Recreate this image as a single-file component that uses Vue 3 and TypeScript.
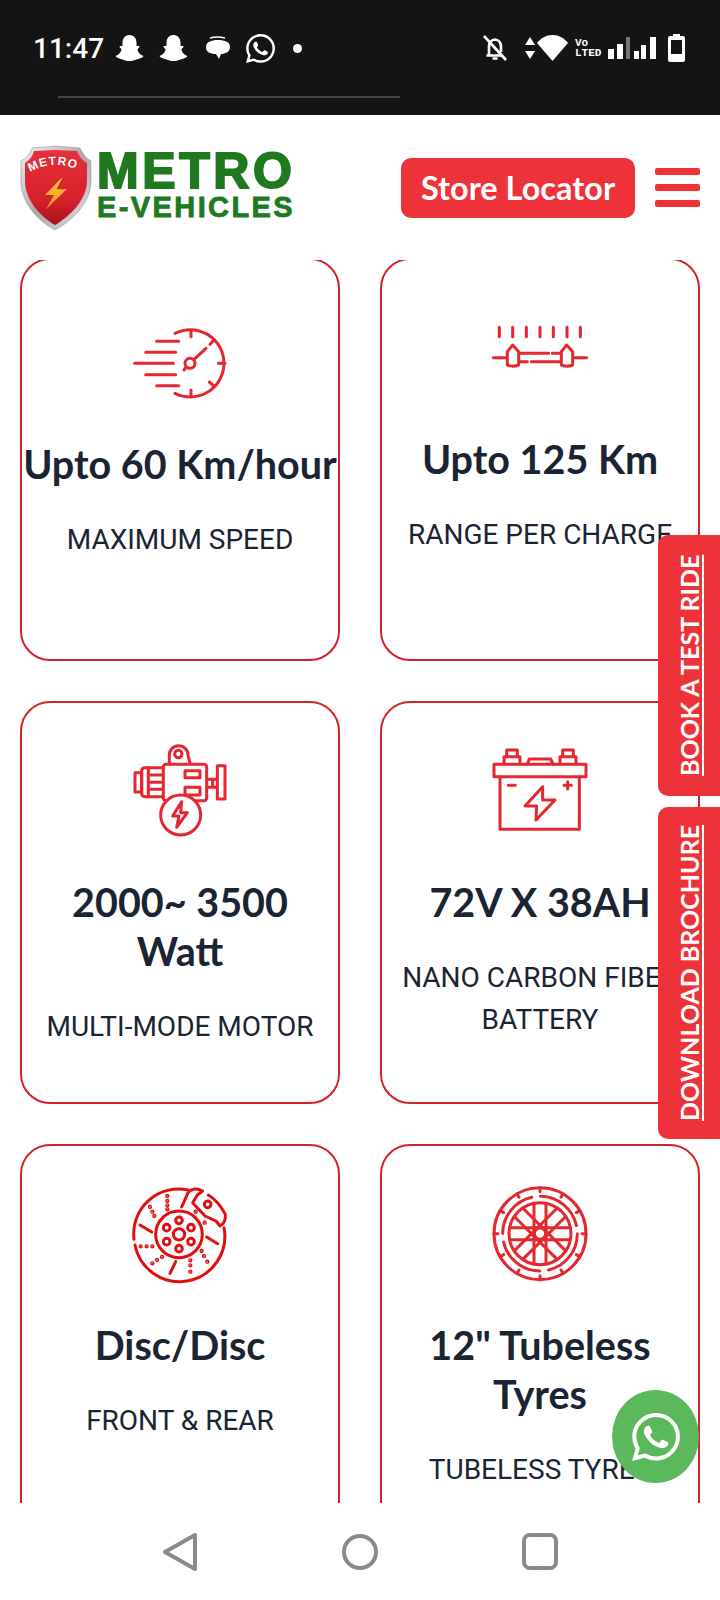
<script setup lang="ts">
type Card = { icon: string; title: string; label: string; top: number };

const cards: Card[] = [
  { icon: "speed", title: "Upto 60 Km/hour", label: "MAXIMUM SPEED", top: -63 },
  { icon: "range", title: "Upto 125 Km", label: "RANGE PER CHARGE", top: -63 },
  { icon: "motor", title: "2000~ 3500\nWatt", label: "MULTI-MODE MOTOR", top: 6 },
  { icon: "battery", title: "72V X 38AH", label: "NANO CARBON FIBER BATTERY", top: 6 },
  { icon: "disc", title: "Disc/Disc", label: "FRONT & REAR", top: 12 },
  { icon: "wheel", title: '12" Tubeless\nTyres', label: "TUBELESS TYRES", top: 12 },
];

const whatsapp =
  "M17.472 14.382c-.297-.149-1.758-.867-2.03-.967-.273-.099-.471-.148-.67.15-.197.297-.767.966-.94 1.164-.173.199-.347.223-.644.075-.297-.15-1.255-.463-2.39-1.475-.883-.788-1.48-1.761-1.653-2.059-.173-.297-.018-.458.13-.606.134-.133.298-.347.446-.52.149-.174.198-.298.298-.497.099-.198.05-.371-.025-.52-.075-.149-.669-1.612-.916-2.207-.242-.579-.487-.5-.669-.51-.173-.008-.371-.01-.57-.01-.198 0-.52.074-.792.372-.272.297-1.04 1.016-1.04 2.479 0 1.462 1.065 2.875 1.213 3.074.149.198 2.096 3.2 5.077 4.487.709.306 1.262.489 1.694.625.712.227 1.36.195 1.871.118.571-.085 1.758-.719 2.006-1.413.248-.694.248-1.289.173-1.413-.074-.124-.272-.198-.57-.347m-5.421 7.403h-.004a9.87 9.87 0 01-5.031-1.378l-.361-.214-3.741.982.998-3.648-.235-.374a9.86 9.86 0 01-1.51-5.26c.001-5.45 4.436-9.884 9.888-9.884 2.64 0 5.122 1.03 6.988 2.898a9.825 9.825 0 012.893 6.994c-.003 5.45-4.437 9.884-9.885 9.884m8.413-18.297A11.815 11.815 0 0012.05 0C5.495 0 .16 5.335.157 11.892c0 2.096.547 4.142 1.588 5.945L.057 24l6.305-1.654a11.882 11.882 0 005.683 1.448h.005c6.554 0 11.89-5.335 11.893-11.893a11.821 11.821 0 00-3.48-8.413z";

const ghost =
  "M14 1C9 1 7 5 7 9v3H4c0 2 2 3 2 3 0 3-3 6-6 7 1 2 4 2 5 3 2 0 4 2 9 2s7-2 9-2c1-1 4-1 5-3-3-1-6-4-6-7 0 0 2-1 2-3h-3V9c0-4-2-8-7-8z";

const discDots = [
  [172, 75], [172, 90], [172, 103], [172, 115], [120, 108], [127, 122], [133, 135],
  [92, 226], [110, 226], [127, 226], [127, 277], [141, 267], [156, 258],
  [241, 268], [241, 283], [241, 302], [275, 240], [282, 255], [292, 272], [257, 122], [284, 155],
];
const discBolts = [[207, 148], [243, 170], [243, 212], [207, 233], [170, 212], [170, 170]];

const wheelC = { x: 210, y: 188 };
const wheelTicks = Array.from({ length: 12 }, (_, i) => {
  const a = (i * Math.PI) / 6;
  return {
    x1: wheelC.x + Math.cos(a) * 138,
    y1: wheelC.y + Math.sin(a) * 138,
    x2: wheelC.x + Math.cos(a) * 126,
    y2: wheelC.y + Math.sin(a) * 126,
  };
});
const wheelSpokes = [0, 45, 90, 135].flatMap((deg) => {
  const a = (deg * Math.PI) / 180;
  const dx = Math.cos(a);
  const dy = Math.sin(a);
  return [-18, 18].map((off) => ({
    x1: wheelC.x - dx * 90 - dy * off,
    y1: wheelC.y - dy * 90 + dx * off,
    x2: wheelC.x + dx * 90 - dy * off,
    y2: wheelC.y + dy * 90 + dx * off,
  }));
});
</script>

<template>
  <div class="phone">
    <div class="status">
      <div class="status-row">
        <span class="time">11:47</span>
        <svg class="st ghost" viewBox="0 0 28 28"><path :d="ghost" fill="#fff" /></svg>
        <svg class="st ghost g2" viewBox="0 0 28 28"><path :d="ghost" fill="#fff" /></svg>
        <svg class="st msg" viewBox="0 0 26 24">
          <path d="M5 2 Q12 0 20 2" fill="none" stroke="#fff" stroke-width="1.6" />
          <path d="M1 11C1 6 6 4 13 4s12 2 12 7-5 7-9 7l-2 5-3-5C5 18 1 16 1 11z" fill="#fff" />
        </svg>
        <svg class="st wa" viewBox="0 0 24 24"><path :d="whatsapp" fill="#fff" /></svg>
        <span class="dot"></span>
        <span class="spacer"></span>
        <svg class="st bell" viewBox="0 0 24 26" fill="none" stroke="#fff" stroke-width="2.6">
          <path d="M6 20V12C6 8 8 5 12 4.500C16 5 18 8 18 12V17M3.500 20.500H18M9.500 23.500H14.500" />
          <path d="M1 1L23 25" />
        </svg>
        <svg class="st arrows" viewBox="0 0 10 22"><path d="M5 0l5 8H0zM5 22L0 14h10z" fill="#fff" /></svg>
        <svg class="st wifi" viewBox="0 0 31 26"><path d="M15.500 26L0 8C4 3 9 0 15.500 0S27 3 31 8z" fill="#fff" /></svg>
        <span class="volte"><span>Vo</span><span>LTED</span></span>
        <svg class="st sig" viewBox="0 0 50 22">
          <rect x="0" y="12" width="6" height="10" fill="#fff" />
          <rect x="9" y="7" width="6" height="15" fill="#fff" />
          <rect x="18" y="0" width="4" height="22" fill="#777" />
          <rect x="26" y="14" width="5" height="8" fill="#fff" />
          <rect x="33" y="8" width="5" height="14" fill="#fff" />
          <rect x="42" y="0" width="6" height="22" fill="#fff" />
        </svg>
        <svg class="st batt" viewBox="0 0 17 28">
          <path d="M5 0h7v2h3a2 2 0 012 2v22a2 2 0 01-2 2H2a2 2 0 01-2-2V4a2 2 0 012-2h3z" fill="#fff" />
          <rect x="3" y="6" width="11" height="14" fill="#141414" />
        </svg>
      </div>
      <div class="handle"></div>
    </div>

    <header class="top">
      <div class="logo">
        <svg class="shield" viewBox="0 0 72 86">
          <defs>
            <linearGradient id="silver" x1="0" y1="0" x2="1" y2="1">
              <stop offset="0" stop-color="#f2f2f2" />
              <stop offset="0.5" stop-color="#a9a9a9" />
              <stop offset="1" stop-color="#e6e6e6" />
            </linearGradient>
            <linearGradient id="redfill" x1="0" y1="0" x2="0" y2="1">
              <stop offset="0" stop-color="#e8303a" />
              <stop offset="0.7" stop-color="#d3202a" />
              <stop offset="1" stop-color="#a5121a" />
            </linearGradient>
            <linearGradient id="bolt" x1="0" y1="0" x2="0" y2="1">
              <stop offset="0" stop-color="#ffd23c" />
              <stop offset="1" stop-color="#f28a1e" />
            </linearGradient>
            <path id="arc" d="M10 27Q35 13 62 27" />
          </defs>
          <path d="M36 1L60 3Q64 12 71 16V36C71 58 52 76 35 85 18 76 1 58 1 36V16Q9 12 12 3z" fill="url(#silver)" stroke="#999" stroke-width="0.6" />
          <path d="M35 5L57 6Q60 14 67 18V36C67 55 49 72 35 80 21 72 5 55 5 36V18Q12 14 14 6z" fill="url(#redfill)" />
          <text class="shield-text" fill="#fff"><textPath href="#arc">METRO</textPath></text>
          <path d="M42.700 31.700L25 50H34L26 64.300 46.700 44.300H36.700z" fill="url(#bolt)" />
        </svg>
        <div class="logo-text">
          <div class="logo-big">METRO</div>
          <div class="logo-small">E-VEHICLES</div>
        </div>
      </div>
      <div class="top-right">
        <button class="store">Store Locator</button>
        <div class="burger"><i></i><i></i><i></i></div>
      </div>
    </header>

    <main class="scroll">
      <div class="grid">
        <section v-for="card in cards" :key="card.icon" class="card" :class="{ 'card-first': card.icon === 'speed' }">
          <svg
            class="icon"
            :viewBox="`0 ${card.top} 420 435`"
            fill="none"
            stroke="#e5272f"
            stroke-width="9"
            stroke-linecap="round"
            stroke-linejoin="round"
          >
            <g v-if="card.icon === 'speed'">
              <path d="M140 94H206M107 127H197M74 160H190M107 194H197M140 227H206" />
              <path d="M195 70A101 101 0 1 1 195 250" />
              <path d="M243 62V80M312 90L300 103M345 160H325M312 228L298 216M243 258V240" />
              <circle cx="240" cy="160" r="15" />
              <path d="M252 148L288 115M222 180L228 172" />
            </g>
            <g v-else-if="card.icon === 'range'">
              <path d="M88 52V80M128 52V80M169 52V80M210 52V80M250 52V80M291 52V80M331 52V80" />
              <path d="M112 165V125L128 105 146 125V165Q129 172 112 165z" />
              <path d="M274 165V125L290 105 308 125V165Q291 172 274 165z" />
              <path d="M70 143H110M148 130H236M148 155H172M184 155H272M247 130H272M310 143H350" />
            </g>
            <g v-else-if="card.icon === 'motor'">
              <path d="M178 100V75A28 28 0 0 1 234 75L240 100" />
              <circle cx="205" cy="72" r="11" />
              <rect x="160" y="103" width="130" height="109" rx="8" />
              <path d="M160 113H105Q95 113 95 123V190Q95 200 105 200H160" />
              <path d="M115 113V200M115 135H158M115 157H158M115 178H158" />
              <rect x="75" y="128" width="20" height="58" />
              <rect x="225" y="122" width="45" height="21" />
              <rect x="225" y="172" width="45" height="23" />
              <path d="M292 148H320M292 172H320M308 148V172" />
              <rect x="322" y="107" width="23" height="100" />
              <circle cx="212" cy="255" r="60" fill="#fff" />
              <path d="M215 215L188 258H207L200 292 232 248H212z" />
            </g>
            <g v-else-if="card.icon === 'battery'">
              <rect x="72" y="103" width="276" height="37" />
              <path d="M90 140V298H328V140" />
              <path d="M102 103V80H150V103M110 80V60H142V80M270 103V80H318V103M278 80V60H310V80" />
              <path d="M172 103L178 87H242L250 103" />
              <path d="M115 166H136M282 166H304M293 155V177" />
              <path d="M218 170L165 228H200L198 270 255 210H218z" />
            </g>
            <g v-else-if="card.icon === 'disc'" stroke="#e01010">
              <path d="M75 222A135 135 0 0 0 342 170" />
              <path d="M72 205A135 135 0 0 1 235 57" />
              <circle cx="207" cy="190" r="70" />
              <circle cx="207" cy="190" r="17" />
              <circle v-for="(b, i) in discBolts" :key="i" :cx="b[0]" :cy="b[1]" r="10" />
              <path d="M90 162L125 183M290 198L323 218M197 272L180 307M215 108L232 70" />
              <circle v-for="(d, i) in discDots" :key="'d' + i" :cx="d[0]" :cy="d[1]" r="2" fill="#e01010" />
              <path d="M232 68Q250 45 278 60L262 72 248 95 285 135 318 150 330 165Q348 155 346 130 325 90 295 72" fill="#fff" />
              <circle cx="293" cy="100" r="10" />
            </g>
            <g v-else>
              <circle :cx="wheelC.x" :cy="wheelC.y" r="138" />
              <circle :cx="wheelC.x" :cy="wheelC.y" r="112" stroke-dasharray="150 26" />
              <circle :cx="wheelC.x" :cy="wheelC.y" r="93" />
              <line v-for="(t, i) in wheelTicks" :key="i" :x1="t.x1" :y1="t.y1" :x2="t.x2" :y2="t.y2" />
              <line v-for="(s, i) in wheelSpokes" :key="'s' + i" :x1="s.x1" :y1="s.y1" :x2="s.x2" :y2="s.y2" />
              <circle :cx="wheelC.x" :cy="wheelC.y" r="17" fill="#fff" />
            </g>
          </svg>
          <h3 class="title">{{ card.title }}</h3>
          <p class="label">{{ card.label }}</p>
        </section>
      </div>
    </main>

    <nav class="nav">
      <svg class="nav-icon" viewBox="0 0 36 40" fill="none" stroke="#8a8a8a" stroke-width="4" stroke-linejoin="round">
        <path d="M33 3V37L3 20z" />
      </svg>
      <svg class="nav-icon" viewBox="0 0 36 40" fill="none" stroke="#8a8a8a" stroke-width="4">
        <circle cx="18" cy="20" r="16" />
      </svg>
      <svg class="nav-icon" viewBox="0 0 36 40" fill="none" stroke="#8a8a8a" stroke-width="4">
        <rect x="2" y="3" width="32" height="33" rx="6" />
      </svg>
    </nav>

    <a class="side side-book">BOOK A TEST RIDE</a>
    <a class="side side-brochure">DOWNLOAD BROCHURE</a>
    <div class="fab">
      <svg viewBox="0 0 24 24" width="48" height="48"><path :d="whatsapp" fill="#fff" /></svg>
    </div>
  </div>
</template>

<style scoped>
.phone {
  position: relative;
  width: 720px;
  height: 1600px;
  display: flex;
  flex-direction: column;
  overflow: hidden;
  background: #fff;
}

.status {
  height: 115px;
  flex-shrink: 0;
  background: #141414;
  padding-top: 33px;
  box-sizing: border-box;
}

.status-row {
  display: flex;
  align-items: center;
  height: 30px;
  padding-left: 33px;
  padding-right: 35px;
}

.time {
  color: #fff;
  font: 500 28px Roboto, sans-serif;
  width: 82px;
}

.st {
  display: block;
  flex-shrink: 0;
}

.ghost {
  width: 29px;
  height: 28px;
}

.g2 {
  margin-left: 15px;
}

.msg {
  width: 26px;
  height: 24px;
  margin-left: 17px;
}

.wa {
  width: 29px;
  height: 29px;
  margin-left: 15px;
}

.dot {
  width: 9px;
  height: 9px;
  border-radius: 50%;
  background: #fff;
  margin-left: 18px;
}

.spacer {
  flex: 1;
}

.bell {
  width: 24px;
  height: 26px;
  margin-right: 18px;
}

.arrows {
  width: 10px;
  height: 22px;
}

.wifi {
  width: 31px;
  height: 26px;
  margin-left: 2px;
}

.volte {
  display: flex;
  flex-direction: column;
  width: 24px;
  margin-left: 7px;
  color: #fff;
  font: 700 11px/10px "Liberation Mono", monospace;
}

.sig {
  width: 50px;
  height: 22px;
  margin-left: 9px;
}

.batt {
  width: 17px;
  height: 28px;
  margin-left: 10px;
}

.handle {
  height: 2px;
  margin: 33px 0 0 58px;
  width: 342px;
  background: #454545;
}

.top {
  height: 145px;
  flex-shrink: 0;
  background: #fff;
  display: flex;
  align-items: center;
  justify-content: space-between;
  padding: 0 20px;
  box-sizing: border-box;
}

.logo {
  display: flex;
  align-items: center;
  gap: 5px;
}

.shield {
  width: 72px;
  height: 86px;
  display: block;
}

.shield-text {
  font: 700 12px "Liberation Sans", sans-serif;
  letter-spacing: 1px;
}

.logo-text {
  color: #1f7a1f;
  font-family: "Liberation Sans", Arial, sans-serif;
  font-weight: 700;
  margin-top: -6px;
}

.logo-big {
  font-size: 50px;
  line-height: 45px;
  letter-spacing: 3.600px;
  -webkit-text-stroke: 2px #1f7a1f;
}

.logo-small {
  font-size: 29px;
  line-height: 26px;
  letter-spacing: 2.400px;
  -webkit-text-stroke: 0.8px #1f7a1f;
}

.top-right {
  display: flex;
  align-items: center;
  gap: 20px;
}

.store {
  width: 234px;
  height: 60px;
  border: 0;
  padding: 0;
  border-radius: 10px;
  background: #ee3239;
  color: #fff;
  font: 700 32.500px Lato, sans-serif;
}

.burger {
  width: 45px;
  display: flex;
  flex-direction: column;
  gap: 9px;
}

.burger i {
  display: block;
  height: 7px;
  border-radius: 2px;
  background: #ee3239;
}

.scroll {
  flex: 1;
  min-height: 0;
  overflow: hidden;
}

.grid {
  display: grid;
  grid-template-columns: 320px 320px;
  column-gap: 40px;
  row-gap: 40px;
  padding: 0 20px;
  margin-top: -2px;
}

.card {
  height: 403px;
  box-sizing: border-box;
  border: 2px solid #d3222a;
  border-radius: 30px;
  padding-top: 29px;
  text-align: center;
  background: #fff;
}

.icon {
  display: block;
  width: 140px;
  height: 145px;
  margin: 0 auto;
}

.card-first .icon {
  margin-bottom: 5px;
}

.title {
  margin: 0;
  font: 700 39.500px/49px Lato, sans-serif;
  color: #1a2433;
  white-space: pre-line;
}

.label {
  margin: 31px 0 0;
  font: 400 28px/42px Roboto, sans-serif;
  color: #1a2433;
}

.nav {
  height: 97px;
  flex-shrink: 0;
  background: #fff;
  display: flex;
  justify-content: center;
  gap: 144px;
  padding-top: 29px;
  box-sizing: border-box;
}

.nav-icon {
  width: 36px;
  height: 40px;
}

.side {
  position: absolute;
  right: 0;
  width: 62px;
  display: flex;
  align-items: center;
  justify-content: center;
  background: #ee3239;
  color: #fff;
  font: 700 25px Lato, sans-serif;
  text-decoration: underline;
  writing-mode: vertical-rl;
  white-space: nowrap;
  transform: rotate(180deg);
  border-radius: 0 10px 10px 0;
}

.side-book {
  top: 535px;
  height: 261px;
}

.side-brochure {
  top: 807px;
  height: 332px;
}

.fab {
  position: absolute;
  left: 612px;
  top: 1390px;
  width: 87px;
  height: 93px;
  border-radius: 50%;
  background: #5cb85c;
  display: flex;
  align-items: center;
  justify-content: center;
}
</style>
